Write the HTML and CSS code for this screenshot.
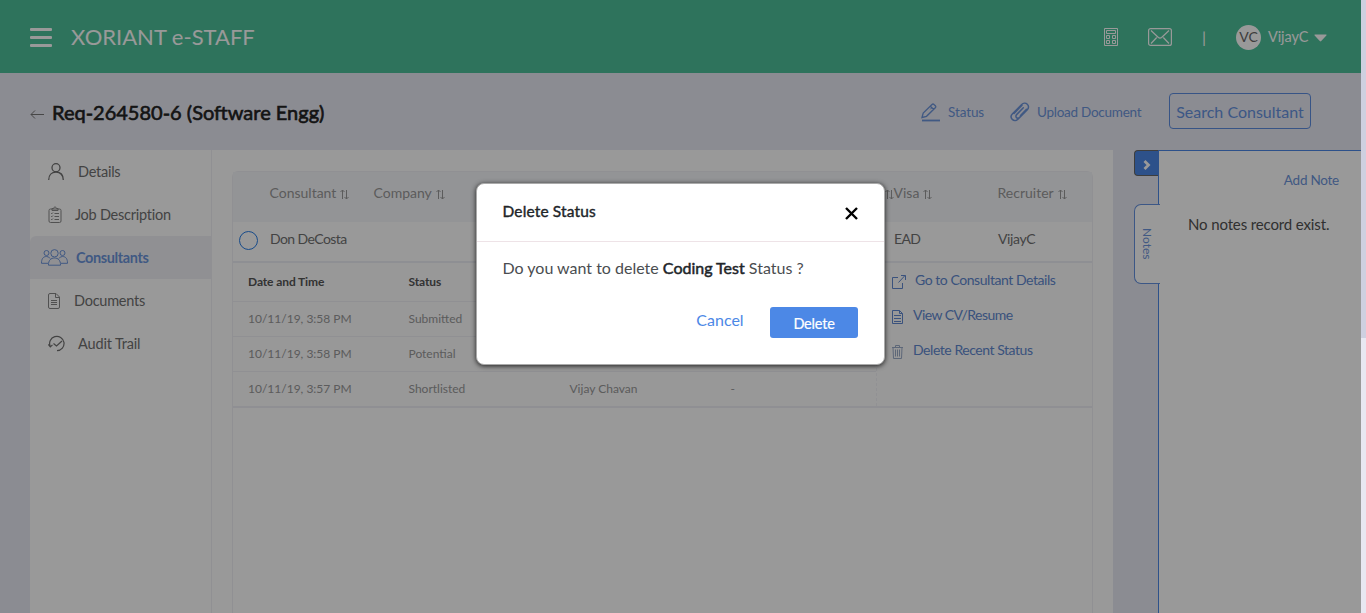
FILE: index.html
```html
<!DOCTYPE html>
<html lang="en">
<head>
<meta charset="utf-8">
<title>XORIANT e-STAFF</title>
<link rel="stylesheet" href="styles.css">
</head>
<body>
<svg class="defs" width="0" height="0">
  <symbol id="sort" viewBox="0 0 9 11"><path d="M2.500 10V1M.5 3l2-2 2 2M6.500 1v9M4.500 8l2 2 2-2" fill="none" stroke="currentColor"/></symbol>
</svg>
<div class="page">
  <div class="app">
    <header class="topbar">
      <div class="burger"><i></i><i></i><i></i></div>
      <div class="brand">XORIANT e-STAFF</div>
      <svg class="calc" width="14" height="18" viewBox="0 0 14 18" fill="none" stroke="currentColor"><path d="M.5.5h13v17H.5zM2.500 2.500h9v3h-9zM2.500 7.500h3v3h-3zM8.500 7.500h3v3h-3zM2.500 12.500h3v3h-3zM8.500 12.500h3v3h-3z"/></svg>
      <svg class="mail" width="24" height="18" viewBox="0 0 24 18" fill="none" stroke="currentColor" stroke-width="1.200"><rect x=".6" y=".6" width="22.800" height="16.800" rx="2"/><path d="M3 2.500l7.400 7q1.600 1.300 3.200 0l7.400-7M3 15.500l5.700-6M21 15.500l-5.700-6"/></svg>
      <span class="divider">|</span>
      <span class="avatar">VC</span>
      <span class="user">VijayC</span>
      <svg class="caret" width="13" height="8" viewBox="0 0 13 8"><path d="M1 .5h11q1 0 .4.900L7.200 7q-.7.800-1.400 0L.6 1.400Q0 .5 1 .5z" fill="currentColor"/></svg>
    </header>

    <div class="titlebar">
      <svg class="back" width="15" height="11" viewBox="0 0 15 11" fill="none" stroke="currentColor"><path d="M14 5.500H1M5 1.500l-4 4 4 4"/></svg>
      <h1 class="title">Req-264580-6 (Software Engg)</h1>
      <svg class="pen" width="20" height="19" viewBox="0 0 20 19" fill="none" stroke="currentColor" stroke-width="1.300"><path d="M1 14.500l1.200-4.500L11 1.500q1-1 2 0l1.300 1.200q1 1 0 2L5.500 13.300zM9.300 3.200l3.300 3.200"/><path d="M10.800 4.800l-1.500 1.500" stroke-width="1"/><path d="M1 17.500h18" stroke-width="1.800"/></svg>
      <span class="tool tool-status">Status</span>
      <svg class="clip" width="20" height="20" viewBox="0 0 20 20" fill="none" stroke="currentColor" stroke-width="1.500" stroke-linecap="round"><path d="M15.500 9.500l-7.300 7.600c-1.700 1.700-4.300 1.800-5.900.3-1.500-1.500-1.500-3.900.2-5.600l9.200-9.300c1.500-1.500 4-1.700 5.600-.3 1.700 1.500 1.500 3.900 0 5.500l-7.600 7.700c-1 1-2.300 1-3.200.2-.8-.8-.8-2.100.1-3l6.700-6.900M4 11.500l8-8.200M10.500 13.500l6-6.200"/></svg>
      <span class="tool tool-upload">Upload Document</span>
      <button class="search">Search Consultant</button>
    </div>

    <div class="content">
      <nav class="side">
        <a class="item details"><svg width="16" height="17" viewBox="0 0 16 17" fill="none" stroke="currentColor" stroke-width="1.300"><circle cx="8" cy="4.700" r="4"/><path d="M.7 17c0-5 3-7.800 7.300-7.800s7.300 2.800 7.300 7.800"/></svg><span>Details</span></a>
        <a class="item job"><svg width="14" height="17" viewBox="0 0 14 17" fill="none" stroke="currentColor"><rect x="1" y="3" width="12" height="13.500" rx="1.500"/><path d="M4 4.500V2.500h1.500q1.500-3.500 3 0H10v2zM6.500 7.500H11M6.500 10.500H11M6.500 13.500H11M3 7l.8.800L5 6.500M3 10l.8.800L5 9.500M3 13l.8.800L5 12.500"/></svg><span>Job Description</span></a>
        <a class="item consult active"><svg width="27" height="17" viewBox="0 0 27 17" fill="none" stroke="currentColor"><circle cx="13.500" cy="4.300" r="3.700"/><circle cx="5.500" cy="4" r="2.500"/><circle cx="21.500" cy="4" r="2.500"/><path d="M7.500 16.200c-.2-5 2.500-7.200 6-7.200s6.200 2.200 6 7.200zM7 14.300H.5C.5 10 2 7.500 5.500 7.500q2.500 0 3.500 2M20 14.300h6.500c0-4.300-1.500-6.800-5-6.800q-2.500 0-3.500 2"/></svg><span>Consultants</span></a>
        <a class="item docs"><svg width="12" height="16" viewBox="0 0 12 16" fill="none" stroke="currentColor"><path d="M2 .5h6l3.500 3.500v10q0 1.500-1.500 1.500H2Q.5 15.500.5 14V2Q.5.500 2 .5zM7.500.500V4.500h4M3 7.500h6M3 9.500h6M3 11.500h6"/></svg><span>Documents</span></a>
        <a class="item audit"><svg width="17" height="17" viewBox="0 0 17 17" fill="none" stroke="currentColor" stroke-width="1.200"><path d="M2.300 11.500A7.200 7.200 0 1 1 9 15.700M.3 9.500l2 2.400 2.200-2M5.500 8.500l3 2.500L14 6"/></svg><span>Audit Trail</span></a>
      </nav>

      <main class="main">
        <section class="card">
          <div class="cols head">
            <span>Consultant <svg><use href="#sort"/></svg></span>
            <span>Company <svg><use href="#sort"/></svg></span>
            <span></span><span></span><span></span>
            <span class="end"><svg><use href="#sort"/></svg></span>
            <span>Visa <svg><use href="#sort"/></svg></span>
            <span>Recruiter <svg><use href="#sort"/></svg></span>
          </div>
          <div class="cols row">
            <i class="radio"></i>
            <span class="name">Don DeCosta</span>
            <span></span><span></span><span></span><span></span><span></span>
            <span class="visa">EAD</span><span class="rec">VijayC</span>
          </div>
          <div class="detail">
            <div class="history">
              <div class="hrow hhead"><span>Date and Time</span><span>Status</span></div>
              <div class="hrow"><span>10/11/19, 3:58 PM</span><span>Submitted</span></div>
              <div class="hrow"><span>10/11/19, 3:58 PM</span><span>Potential</span></div>
              <div class="hrow"><span>10/11/19, 3:57 PM</span><span>Shortlisted</span><span>Vijay Chavan</span><span>-</span></div>
            </div>
            <div class="actions">
              <a class="go"><svg width="14" height="14" viewBox="0 0 14 14" fill="none" stroke="currentColor"><path d="M6 2.500H.5v11h10V8M6.500 7.500l6.500-7M9 .5h4.500V5"/></svg><span>Go to Consultant Details</span></a>
              <a class="cv"><svg width="11" height="14" viewBox="0 0 11 14" fill="none" stroke="currentColor"><path d="M.5.500h7l3 3v10H.5zM7.500.500v3h3M2 5.500h7M2 8.500h7M2 11.500h7"/></svg><span>View CV/Resume</span></a>
              <a class="del"><svg width="11" height="14" viewBox="0 0 11 14" fill="none" stroke="currentColor"><path d="M0 2.500h11M3.500 2.500v-2h4v2M1 2.500l.5 11h8l.5-11M3.500 4.500v7M5.500 4.500v7M7.500 4.500v7"/></svg><span>Delete Recent Status</span></a>
            </div>
          </div>
        </section>
      </main>

      <aside class="notes">
        <div class="rail">
          <button class="toggle"><svg width="8" height="10" viewBox="0 0 8 10" fill="none" stroke="currentColor" stroke-width="2.800"><path d="M1.500 1l4 4-4 4"/></svg></button>
          <div class="tab"><span>Notes</span></div>
        </div>
        <div class="panel">
          <a class="add">Add Note</a>
          <p class="empty">No notes record exist.</p>
        </div>
      </aside>
    </div>
  </div>
  <div class="scrollbar"><div class="thumb"></div></div>
  <div class="overlay"></div>
  <div class="modal">
    <div class="modal-head">
      <h2>Delete Status</h2>
      <svg width="13" height="13" viewBox="0 0 13 13" stroke="#000" stroke-width="2.400"><path d="M1 1l11 11M12 1L1 12"/></svg>
    </div>
    <div class="modal-body">Do you want to delete <b>Coding Test</b> Status ?</div>
    <div class="modal-foot"><button class="cancel">Cancel</button><button class="delete">Delete</button></div>
  </div>
</div>
</body>
</html>
```
FILE: styles.css
```css
* { box-sizing: border-box; margin: 0; padding: 0; }
body { font-family: Lato, Carlito, sans-serif; font-size: 14px; overflow: hidden; }
svg { display: block; flex: none; }
.defs { position: absolute; }
span, h1, h2 { white-space: nowrap; }
button { font-family: inherit; border: 0; background: none; white-space: nowrap; }
.page { position: relative; display: flex; width: 1366px; height: 613px; overflow: hidden; }
.app { width: 1361px; height: 613px; display: flex; flex-direction: column; background: #e8e9f3; }
.scrollbar { width: 5px; background: #e8e8f2; }
.thumb { height: 338px; background: #ced0e0; }

.topbar { height: 73px; background: #4ec09a; color: #fff; display: flex; align-items: center; padding: 0 34px 0 30px; }
.burger { width: 22px; display: flex; flex-direction: column; gap: 5px; margin-top: 2px; }
.burger i { height: 3px; background: #fff; border-radius: 1px; }
.brand { margin-left: 19px; font-size: 22px; line-height: 30px; flex: 1; }
.mail { margin-left: 30px; }
.calc, .mail { margin-top: 1px; }
.divider { width: 64px; text-align: center; font-size: 16px; }
.avatar { width: 25px; height: 25px; border-radius: 50%; background: #fff; color: #666; font-size: 14px; line-height: 24px; text-align: center; margin-top: 2px; }
.user { margin-left: 7px; width: 42px; font-size: 14.500px; letter-spacing: -.1px; }
.caret { margin-left: 4px; margin-top: 2px; }

.titlebar { height: 77px; display: flex; align-items: center; padding: 1px 50px 0 30px; color: #6c94da; }
.back { color: #777; margin-top: 5px; }
.title { margin-left: 7px; flex: 1; font-size: 20px; font-weight: 400; color: #222; -webkit-text-stroke: .6px #222; }
.tool { font-size: 13.500px; letter-spacing: -.26px; }
.tool-status { margin-left: 8px; width: 36px; letter-spacing: -.1px; }
.clip { margin-left: 26px; }
.tool-upload { margin-left: 7px; width: 104px; }
.pen { margin-right: -1px; }
.search { margin-left: 28px; width: 142px; height: 36px; border: 1px solid #5c8de0; border-radius: 4px; color: #6592e0; font-size: 16px; margin-top: -2px; }

.content { flex: 1; display: flex; }
.side { width: 182px; margin-left: 30px; background: #fff; border-right: 1px solid #f0f0f5; }
.item { height: 43px; display: flex; align-items: center; color: #707070; font-size: 14.500px; }
.item span { letter-spacing: -.25px; }
.details { padding-left: 18px; } .details span { margin-left: 14px; }
.job { padding-left: 18px; } .job span { margin-left: 13px; }
.job svg, .docs svg { color: #888; }
.consult { padding-left: 11px; } .consult span { margin-left: 8px; font-weight: 700; letter-spacing: -.38px; }
.active { background: #f1f1f6; color: #6c94da; border-top-left-radius: 6px; }
.docs { padding-left: 18px; } .docs span { margin-left: 14px; }
.audit { padding-left: 18px; } .audit span { margin-left: 13px; letter-spacing: -.15px; }

.main { width: 901px; background: #fff; padding: 21px 20px 0; }
.card { width: 861px; height: 442px; border: 1px solid #f1f1f6; border-bottom: 0; border-radius: 6px 6px 0 0; }
.cols { display: grid; grid-template-columns: 104px 104px 104px 104px 104px 104px 104px 90px; padding-left: 36.500px; }
.head { height: 50px; background: #f6f7fb; color: #999; padding-bottom: 9px; align-items: center; }
.head span { display: flex; align-items: center; gap: 4px; }
.head svg { width: 9px; height: 11px; margin-top: 3px; }
.end { justify-content: flex-end; }
.row { height: 41px; grid-template-columns: 31px 104px 104px 104px 104px 104px 104px 104px 90px; padding: 0 0 5px 6px; align-items: center; border-bottom: 2px solid #edeef5; color: #707070; }
.name { letter-spacing: -.58px; }
.row span { margin-top: -2px; }
.visa { letter-spacing: -.7px; }
.rec { letter-spacing: -.4px; }
.radio { width: 19px; height: 19px; border: 1px solid #277de6; border-radius: 50%; margin-top: 3px; }
.detail { display: flex; height: 145px; background: #fdfdfe; border-bottom: 2px solid #efeff6; }
.history { width: 644px; border-right: 1px dashed #f2f2f7; }
.hrow { height: 35px; display: grid; grid-template-columns: 160.500px 161px 161px 146px; align-items: center; padding: 0 0 2px 15px; font-size: 12px; color: #999; border-bottom: 1px solid #f0f0f6; }
.hrow:last-child { border-bottom: 0; }
.hhead { height: 39px; color: #555; font-weight: 700; letter-spacing: -.1px; }
.actions { color: #6189d0; padding: 0 0 0 15px; font-size: 14px; }
.actions a { display: flex; align-items: center; height: 35px; }
.actions svg { margin-top: 3px; }
.actions span { letter-spacing: -.45px; margin-top: -2px; }
.go span { margin-left: 9px; }
.cv span, .del span { margin-left: 10px; }
.cv span { letter-spacing: -.55px; }
.del svg { color: #9cacc9; }

.notes { width: 227px; margin-left: 21px; display: flex; }
.rail { width: 25px; }
.toggle { width: 25px; height: 26px; background: #6c94da; background: #4c88e6; border: 1px solid #666; border-right: 0; border-radius: 4px 0 0 4px; color: #fff; display: flex; align-items: center; justify-content: center; padding-top: 3px; }
.tab { position: relative; width: 26px; height: 80px; margin-top: 28px; background: #fff; border: 1px solid #6592e0; border-right: 0; border-radius: 7px 0 0 7px; display: flex; align-items: center; justify-content: center; color: #6c94da; font-size: 12px; }
.tab span { writing-mode: vertical-rl; }
.panel { width: 203px; background: #fff; border: solid #4c88e6; border-width: 1px 0 0 1px; padding: 19px 22px 0 29px; display: flex; flex-direction: column; margin-left: -1px; }
.add { align-self: flex-end; color: #6c94da; line-height: 20px; font-size: 13.500px; letter-spacing: -.25px; }
.empty { margin-top: 23px; line-height: 22px; font-size: 15px; letter-spacing: -.13px; color: #505050; white-space: nowrap; }

.overlay { position: absolute; left: 0; top: 0; width: 1361px; height: 613px; background: rgba(0,0,0,.4); }
.modal { position: absolute; left: 476px; top: 183px; width: 409px; height: 182px; background: #fff; border: 1px solid #aaa; border-radius: 8px; box-shadow: 0 1px 5px rgba(0,0,0,.8); }
.modal-head { height: 58px; display: flex; justify-content: space-between; align-items: center; padding: 0 26px 2px 25.500px; border-bottom: 1px solid #eee3e7; }
.modal-head h2 { font-size: 15.500px; font-weight: 400; color: #212529; -webkit-text-stroke: .4px #212529; margin-top: -2px; letter-spacing: .15px; }
.modal-head svg { margin-top: 3px; }
.modal-body { padding: 14px 26px 0 25.500px; line-height: 24px; font-size: 16px; color: #4a4d50; white-space: nowrap; }
.modal-body b { font-weight: 400; color: #212529; -webkit-text-stroke: .5px #212529; }
.modal-foot { display: flex; justify-content: flex-end; padding: 27px 26px 0; }
.cancel { width: 48px; height: 25px; margin-right: 26px; color: #4c88e6; font-size: 16px; }
.delete { width: 88px; height: 31px; background: #4c88e6; color: #fff; border-radius: 3px; font-size: 14.500px; padding-top: 2px; letter-spacing: -.2px; -webkit-text-stroke: .2px #fff; }
```
